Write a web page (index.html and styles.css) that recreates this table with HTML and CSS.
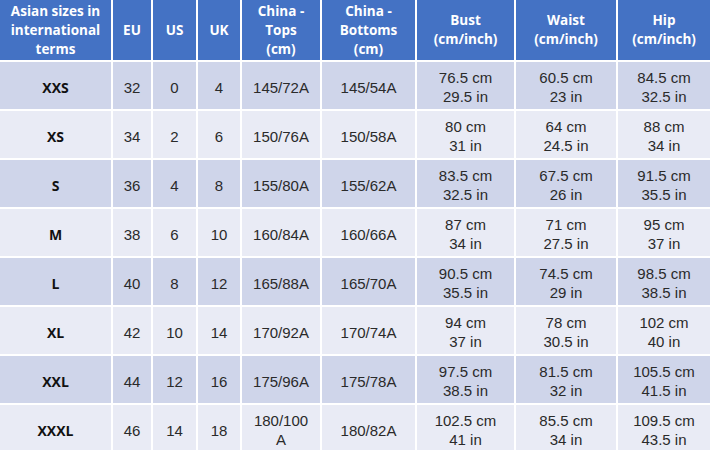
FILE: index.html
```html
<!DOCTYPE html>
<html>
<head>
<meta charset="utf-8">
<link rel="stylesheet" href="styles.css">
</head>
<body>
<table class="sizes">
  <colgroup>
    <col class="c1"><col class="c2"><col class="c3"><col class="c4"><col class="c5"><col class="c6"><col class="c7"><col class="c8"><col class="c9">
  </colgroup>
  <thead>
    <tr>
      <th>Asian sizes in international terms</th>
      <th>EU</th>
      <th>US</th>
      <th>UK</th>
      <th>China -<br>Tops<br>(cm)</th>
      <th>China -<br>Bottoms<br>(cm)</th>
      <th>Bust<br>(cm/inch)</th>
      <th>Waist<br>(cm/inch)</th>
      <th>Hip<br>(cm/inch)</th>
    </tr>
  </thead>
  <tbody>
    <tr><td class="sz">XXS</td><td>32</td><td>0</td><td>4</td><td>145/72A</td><td>145/54A</td><td>76.5 cm<br>29.5 in</td><td>60.5 cm<br>23 in</td><td>84.5 cm<br>32.5 in</td></tr>
    <tr><td class="sz">XS</td><td>34</td><td>2</td><td>6</td><td>150/76A</td><td>150/58A</td><td>80 cm<br>31 in</td><td>64 cm<br>24.5 in</td><td>88 cm<br>34 in</td></tr>
    <tr><td class="sz">S</td><td>36</td><td>4</td><td>8</td><td>155/80A</td><td>155/62A</td><td>83.5 cm<br>32.5 in</td><td>67.5 cm<br>26 in</td><td>91.5 cm<br>35.5 in</td></tr>
    <tr><td class="sz">M</td><td>38</td><td>6</td><td>10</td><td>160/84A</td><td>160/66A</td><td>87 cm<br>34 in</td><td>71 cm<br>27.5 in</td><td>95 cm<br>37 in</td></tr>
    <tr><td class="sz">L</td><td>40</td><td>8</td><td>12</td><td>165/88A</td><td>165/70A</td><td>90.5 cm<br>35.5 in</td><td>74.5 cm<br>29 in</td><td>98.5 cm<br>38.5 in</td></tr>
    <tr><td class="sz">XL</td><td>42</td><td>10</td><td>14</td><td>170/92A</td><td>170/74A</td><td>94 cm<br>37 in</td><td>78 cm<br>30.5 in</td><td>102 cm<br>40 in</td></tr>
    <tr><td class="sz">XXL</td><td>44</td><td>12</td><td>16</td><td>175/96A</td><td>175/78A</td><td>97.5 cm<br>38.5 in</td><td>81.5 cm<br>32 in</td><td>105.5 cm<br>41.5 in</td></tr>
    <tr><td class="sz">XXXL</td><td>46</td><td>14</td><td>18</td><td>180/100<br>A</td><td>180/82A</td><td>102.5 cm<br>41 in</td><td>85.5 cm<br>34 in</td><td>109.5 cm<br>43.5 in</td></tr>
  </tbody>
</table>
</body>
</html>
```
FILE: styles.css
```css
html, body {
  margin: 0;
  padding: 0;
  background: #e9ebf5;
  overflow: hidden;
}
.sizes {
  width: 710px;
  table-layout: fixed;
  border-collapse: collapse;
  font-family: "Liberation Sans", Arial, sans-serif;
  font-size: 15px;
  line-height: 19px;
  color: #2a2a2a;
}
.c1 { width: 112px; }
.c2 { width: 40px; }
.c3 { width: 45px; }
.c4 { width: 44px; }
.c5 { width: 80px; }
.c6 { width: 95px; }
.c7 { width: 99px; }
.c8 { width: 102px; }
.c9 { width: 93px; }
.sizes th,
.sizes td {
  text-align: center;
  vertical-align: middle;
  border-right: 2px solid #fff;
  border-bottom: 2px solid #fff;
}
.sizes th:last-child,
.sizes td:last-child {
  border-right: none;
}
.sizes th {
  background: #4472c4;
  color: #fff;
  font-family: "Open Sans", "Noto Sans", sans-serif;
  font-weight: 700;
  font-size: 13.5px;
  line-height: 19px;
  height: 60px;
  padding: 0 2px;
}
.sizes td {
  height: 44px;
  padding: 3px 4px 0;
}
.sizes tbody tr:nth-child(odd) td { background: #cfd5ea; }
.sizes tbody tr:nth-child(even) td { background: #e9ebf5; }
.sizes td.sz {
  font-family: "Open Sans", "Noto Sans", sans-serif;
  font-weight: 700;
  font-size: 14px;
  color: #111;
}
```
